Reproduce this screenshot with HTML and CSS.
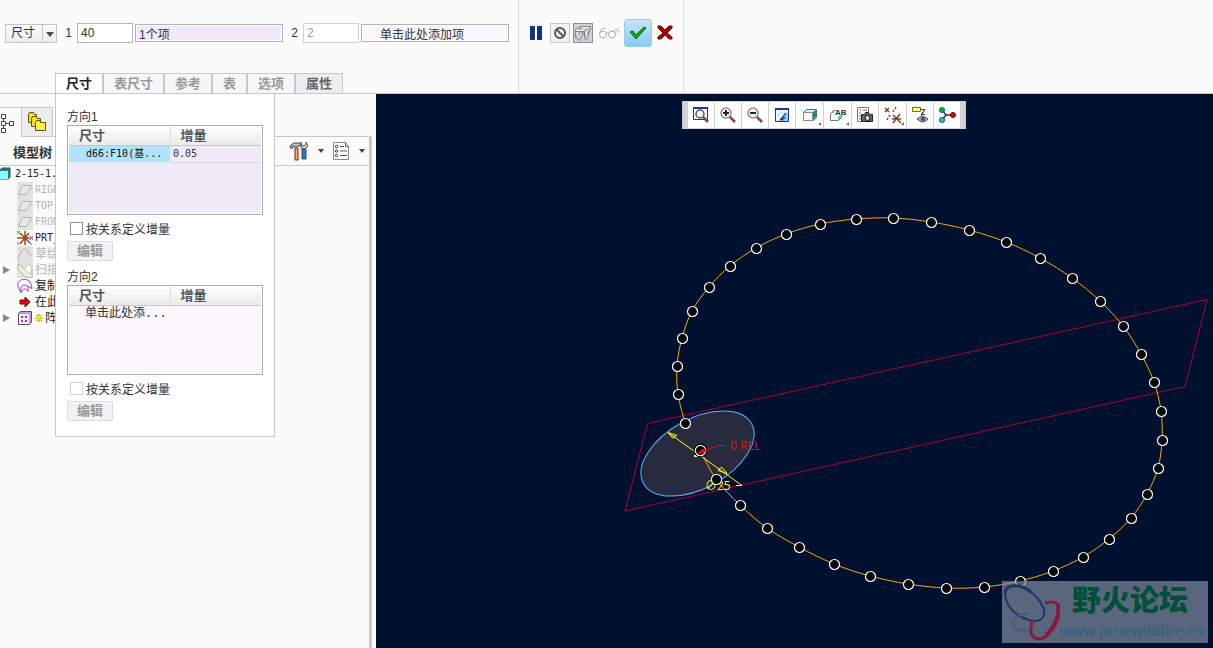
FILE: index.html
```html
<!DOCTYPE html>
<html lang="zh-CN">
  <head>
    <meta charset="UTF-8" />
    <meta name="viewport" content="width=device-width, initial-scale=1.0" />
    <title>阵列</title>
    <link rel="stylesheet" href="styles.css">
  </head>
  <body>
    <header class="dashboard">
      <div class="dash-main">
        <div class="fields">
          <div class="select-wrap">
            <select class="type-select" aria-label="阵列类型">
              <option>尺寸</option>
            </select>
            <span class="select-arrow"></span>
          </div>
          <label class="field-label" for="count1">1</label>
          <input class="count" type="text" id="count1" value="40" />
          <input class="collector active" type="text" aria-label="方向1" value="1个项" readonly />
          <label class="field-label" for="count2">2</label>
          <input class="count" type="text" id="count2" value="2" disabled />
          <input class="collector empty" type="text" aria-label="方向2" value="单击此处添加项" readonly />
        </div>
        <nav class="tabs">
          <button class="tab selected">尺寸</button>
          <button class="tab" disabled>表尺寸</button>
          <button class="tab" disabled>参考</button>
          <button class="tab" disabled>表</button>
          <button class="tab" disabled>选项</button>
          <button class="tab props">属性</button>
        </nav>
      </div>
      <div class="dash-side">
        <div class="dash-actions">
          <button class="action pause" aria-label="暂停">
            <svg width="14" height="16" viewBox="0 0 14 16"><path d="M1 1h4v13H1zM8 1h4v13H8z" fill="#0a3296" /><path d="M5.500 1v13.500H1M12.500 1v13.500H8" fill="none" stroke="#333" /></svg>
          </button>
          <button class="action framed" aria-label="无预览">
            <svg width="18" height="18" viewBox="0 0 18 18"><circle cx="9" cy="9" r="5" fill="none" stroke="#555" stroke-width="2" /><path d="M5.500 5.500l7 7" stroke="#555" stroke-width="2" /></svg>
          </button>
          <button class="action pressed" aria-label="分离预览">
            <svg width="18" height="18" viewBox="0 0 18 18" fill="none"><path d="M1.500 5.500l5-3h10v3l-6 8M1.500 5.500v8l4 3M5.500 16.500l5-9h-9M10.500 7.500l6-5M10.500 7.500v7l2 2 4-12M6.500 2.500v5l-5 6M6.500 7.500l5 3" stroke="#858585" /><path d="M2.500 6.500h7M7.500 3.500h8M12.500 7v6M3.500 8v5" stroke="#f2f2f2" /></svg>
          </button>
          <button class="action glasses" aria-label="校验">
            <svg width="22" height="14" viewBox="0 0 22 14" fill="none" stroke="#a8a8a8"><circle cx="5" cy="8.500" r="3.500" /><circle cx="14" cy="8.500" r="3.500" /><path d="M8 7.500q1.500-1.500 3 0M2 6.500c0-3 3-5 5-4l1 1M16 6c0-2 3-4 4-2v3" /></svg>
          </button>
          <button class="action ok" aria-label="确定">
            <svg width="20" height="16" viewBox="0 0 20 16"><path d="M2 7l3-1 3 4 8-8 2 1-10 11z" fill="#16a616" stroke="#087208" /></svg>
          </button>
          <button class="action" aria-label="取消">
            <svg width="18" height="16" viewBox="0 0 18 16"><path d="M2 1h3l4 4 4-4h3v2l-5 5 5 4v2h-3l-4-4-4 4H2v-2l5-4-5-5z" fill="#b00000" stroke="#7c0505" /></svg>
          </button>
        </div>
      </div>
    </header>

    <div class="workspace">
      <aside class="sidebar">
        <div class="nav-tabs">
          <button class="nav-tab current" aria-label="模型树">
            <svg width="15" height="20" viewBox="0 0 15 20" fill="#fff" stroke="#444"><path d="M3.500 5v11M3.500 10.500h7" fill="none" /><path d="M1.500 1.500h4v4h-4zM1.500 8.500h4v4h-4zM1.500 15.500h4v4h-4zM9.500 8.500h4v4h-4z" /></svg>
          </button>
          <button class="nav-tab" aria-label="文件夹浏览器">
            <svg width="20" height="20" viewBox="0 0 20 20" stroke="#5a5010"><path d="M1.500 2.500l1-2h4l1 2h2v8h-8z" fill="#f3df28" /><path d="M4.500 6.500l1-2h4l1 2h3v8h-9z" fill="#f3df28" /><path d="M8.500 10.500l1-2h3l1 2h5v8h-10z" fill="#fff04a" /></svg>
          </button>
          <span class="nav-rest"></span>
        </div>
        <div class="tree-head">
          <h2>模型树</h2>
          <div class="tree-tools">
            <button class="tool-btn" aria-label="设置">
              <svg width="20" height="20" viewBox="0 0 20 20"><path d="M1 7l1-3 3-2h6l3 3H9l-2 1-3-1v2z" fill="#b4cccc" stroke="#444" /><path d="M6 7h3v12H6z" fill="#f0b060" stroke="#8c1c10" /><path d="M12 1v3l3 1 2-2V1l2 4-3 3h-3l-2-4z" fill="#ccc" stroke="#555" /><path d="M13 8h4v10h-4z" fill="#2c6fd4" stroke="#38506e" /></svg>
            </button>
            <span class="caret"></span>
            <button class="tool-btn list" aria-label="显示">
              <svg width="17" height="20" viewBox="0 0 17 20" fill="none"><path d="M.5 1.500h12l3 4v13H.5z" fill="#fff" stroke="#888" /><path d="M12.500 1.500v4h3" stroke="#666" /><path d="M7 5.500h4M7 10h7M7 14.500h7" stroke="#555" /><circle cx="3.500" cy="5.500" r="1.200" stroke="#333" /><circle cx="3.500" cy="10" r="1.200" stroke="#333" /><circle cx="3.500" cy="14.500" r="1.200" stroke="#333" /></svg>
            </button>
            <span class="caret"></span>
          </div>
        </div>
        <ul class="tree">
          <li class="root"><svg width="12" height="14" viewBox="0 0 12 14"><path d="M0 3l2-2h8v9l-2 2H0z" fill="#168a90" stroke="#444" /><path d="M0 4h8v8H0z" fill="#8ffcff" /></svg>2-15-1.</li>
          <li class="dim"><i></i><svg class="grey" width="16" height="16" viewBox="0 0 16 16"><path d="M5.500 3.500h9l-5 9h-8z" fill="#e8e8e4" stroke="#b8b6a2" /></svg>RIGH</li>
          <li class="dim"><i></i><svg class="grey" width="16" height="16" viewBox="0 0 16 16"><path d="M5.500 3.500h9l-5 9h-8z" fill="#e8e8e4" stroke="#b8b6a2" /></svg>TOP</li>
          <li class="dim"><i></i><svg class="grey" width="16" height="16" viewBox="0 0 16 16"><path d="M5.500 3.500h9l-5 9h-8z" fill="#e8e8e4" stroke="#b8b6a2" /></svg>FRON</li>
          <li><i></i><svg width="16" height="16" viewBox="0 0 16 16" fill="none"><path d="M0 8h13M8 1v14M3 3l10 10M12 3l-9 11" stroke="#9a4a1c" stroke-width="1.500" /><path d="M0 1l3 3M3 1L0 4M13 6l3 4M16 6l-3 4M1 12v3M12 12l3 3" stroke="#666" /></svg>PRT_</li>
          <li class="dim cjk"><i></i><svg class="grey" width="16" height="16" viewBox="0 0 16 16" fill="none"><path d="M1 13l3-7c2-4 5-4 7-1 1 3 2 4 4 5" stroke="#b8b6a2" /><path d="M1 2.500h14M3 13.500h12" stroke="#c6c4b4" stroke-dasharray="1 4" /></svg>草绘</li>
          <li class="dim cjk"><i><b></b></i><svg class="grey" width="16" height="16" viewBox="0 0 16 16"><path d="M1 2l4 2 2 3 5-5 3 5v9l-7-1-7-8z" fill="#eeeee6" stroke="#b4b29c" /><path d="M7 7l5-5 3 5-2 5z" fill="#fff" stroke="#c4c2b0" /></svg>扫描</li>
          <li class="cjk"><i></i><svg width="16" height="16" viewBox="0 0 16 16" fill="none" stroke="#9a3ae0"><path d="M1.500 10C-1 4 3 1 8 1.500c5 0 6 4 7 9l-4-2v5C9 10 6 10 4 14.500L1.500 10M4 14.500C3 8 6 5 11 8.500" /></svg>复制</li>
          <li class="cjk"><i></i><svg width="16" height="16" viewBox="0 0 16 16"><path d="M3 6h5V3l5 5-5 5v-3H3z" fill="#f00000" stroke="#8a0000" /></svg>在此</li>
          <li class="cjk"><i><b></b></i><svg width="16" height="16" viewBox="0 0 16 16"><path d="M1.500 3.500l2-2h11v11l-2 2h-11z" fill="#b9a2dc" stroke="#555" /><path d="M2 4h10v10H2z" fill="#f4ebff" /><path d="M4 6h2v2H4zM8 6h2v2H8zM4 10h2v2H4zM8 10h2v2H8z" fill="#9330dd" /></svg><svg width="8" height="16" viewBox="0 0 8 16"><path d="M1 5l6 6M7 5l-6 6M4 4v8M0 8h8" stroke="#777" /><path d="M2 5l4 6M6 5l-4 6M1 8h6" stroke="#f2ea00" stroke-width="1.500" /></svg>阵</li>
        </ul>

        <section class="dim-panel">
          <h3>方向1</h3>
          <div class="dim-box chosen">
            <table>
              <thead>
                <tr><th class="col-dim">尺寸</th><th>增量</th></tr>
              </thead>
              <tbody>
                <tr><td class="picked">d66:F10(基...</td><td class="value">0.05</td></tr>
              </tbody>
            </table>
          </div>
          <label class="check"><input type="checkbox" />按关系定义增量</label>
          <button class="edit" disabled>编辑</button>
          <h3>方向2</h3>
          <div class="dim-box">
            <table>
              <thead>
                <tr><th class="col-dim">尺寸</th><th>增量</th></tr>
              </thead>
              <tbody>
                <tr><td class="hint">单击此处添...</td><td></td></tr>
              </tbody>
            </table>
          </div>
          <label class="check"><input type="checkbox" disabled />按关系定义增量</label>
          <button class="edit" disabled>编辑</button>
        </section>
      </aside>

      <main class="viewport">
        <svg class="model" viewBox="376 94 837 554" preserveAspectRatio="xMinYMin meet">
          <ellipse cx="697.500" cy="453.500" rx="61.700" ry="34.600" transform="rotate(-29 697.500 453.500)" fill="#282a3e" stroke="#58b0ff" />
          <path d="M647.500 423.500L1207 299.500 1185 386.500 625 511z" fill="none" stroke="#a8003c" />
          <path id="curve" fill="none" stroke="#ffa500" />
          <g id="marks" fill="#000" stroke="#fff" stroke-width="1.200"></g>
          <g fill="none" stroke="#ff0">
            <path d="M668 432.500L742 485.500H736M668 432.500l5 6M668 432.500l9 3M673 438l4-3M727 473.500l-5-6M727 473.500l-9-3M718 470l4-3" />
            <path d="M694 456h4" stroke-width="2" />
          </g>
          <circle cx="700.500" cy="450.500" r="6.500" fill="none" stroke="#000" />
          <circle cx="700.500" cy="450.500" r="5" fill="#000" stroke="#fff" />
          <path d="M698 453l20-7.500h7" fill="none" stroke="#f00" />
          <path d="M697 454l5-5 6 1-5 3z" fill="#f00" />
          <text class="note rel" x="730" y="450">0 REL</text>
          <text class="note dia" x="705" y="490">∅25</text>
          <circle cx="716.500" cy="479.500" r="5" fill="#000" stroke="#fff" />
        </svg>

        <div class="view-bar">
          <button aria-label="重新调整"><svg width="18" height="18" viewBox="0 0 18 18" fill="none"><path d="M1.500 1.500h14v12h-14z" stroke="#0a3f9c" /><path d="M1 2h15" stroke="#0a3f9c" stroke-width="2" /><circle cx="8" cy="8" r="4" fill="#e2f6ff" stroke="#555" stroke-width="1.500" /><path d="M11 11l5 5" stroke="#8c4a28" stroke-width="2.500" /></svg></button>
          <button aria-label="放大"><svg width="18" height="18" viewBox="0 0 18 18" fill="none"><circle cx="7" cy="7" r="5" fill="#fff" stroke="#888" stroke-width="1.500" /><path d="M4 7h6M7 4v6" stroke="#222" stroke-width="2" /><path d="M11 11l5 5" stroke="#8c4a28" stroke-width="2.500" /></svg></button>
          <button aria-label="缩小"><svg width="18" height="18" viewBox="0 0 18 18" fill="none"><circle cx="7" cy="7" r="5" fill="#fff" stroke="#888" stroke-width="1.500" /><path d="M4 7h6" stroke="#222" stroke-width="2" /><path d="M11 11l5 5" stroke="#8c4a28" stroke-width="2.500" /></svg></button>
          <button aria-label="重画"><svg width="18" height="18" viewBox="0 0 18 18" fill="none"><path d="M2.500 2.500h13v13h-13z" fill="#edf6ff" stroke="#0a3f9c" /><path d="M2 3h14" stroke="#0a3f9c" stroke-width="2" /><path d="M3 15c5 0 8-4 12-9v9z" fill="#9cc4ee" /><path d="M13 7l-5 6M7 13l2 1 3-3" stroke="#0a3a90" stroke-width="1.200" /><path d="M6 6h1M5 9h1M9 7h1" stroke="#7a9ad0" /></svg></button>
          <button class="more" aria-label="显示样式"><svg width="18" height="18" viewBox="0 0 18 18"><path d="M2.500 6.500l3-3h10v8l-3 3h-10z" fill="#aff" stroke="#666" /><path d="M12 6l3-2v7l-3 3z" fill="#148c92" /><path d="M2.500 6.500h9v8h-9z" fill="#f6f6f6" stroke="#888" /></svg></button>
          <button class="more" aria-label="已命名视图"><svg width="18" height="18" viewBox="0 0 18 18"><path d="M1.500 14.500v-7l3-3h3M1.500 14.500h8l3-3v-2" fill="none" stroke="#777" /><path d="M2 7l3-3v3zM9 14v-3l3-2v3z" fill="#2fd0d8" /><text class="icon-text" x="6" y="9">AB</text></svg></button>
          <button aria-label="视图管理器"><svg width="18" height="18" viewBox="0 0 18 18"><path d="M1.500 1.500h11v14h-11z" fill="#fff" stroke="#777" /><path d="M3 4h2M3 7h2M3 10h2M3 13h2M7 4h4" stroke="#777" /><path d="M5.500 8.500h3l1-2h3l1 2h3v7h-11z" fill="#666" stroke="#222" /><circle cx="11.500" cy="12" r="2.500" fill="#ddd" stroke="#111" /></svg></button>
          <button class="more" aria-label="基准显示"><svg width="18" height="18" viewBox="0 0 18 18" fill="none" stroke="#87401c" stroke-width="1.500"><path d="M1 2l4 4M5 2L1 6M12 1l-1 2M10 4l-1 2M6 9l-1 2M4 12l-1 2M9 9l8 8M16 8l-7 9M8 13h9" /></svg></button>
          <button aria-label="注释显示"><svg width="18" height="18" viewBox="0 0 18 18"><path d="M1.500 1.500h8v4h-8z" fill="#ffff8a" stroke="#777010" /><path d="M9 3.500h5l-4 5h4M13.500 4l-3 6" fill="none" stroke="#444" /><path d="M6 13q5-5 11 0-5 6-11 0z" fill="#9ab" stroke="#555" /><circle cx="12" cy="13" r="2" fill="#357" /></svg></button>
          <button aria-label="旋转中心"><svg width="18" height="18" viewBox="0 0 18 18"><path d="M4 4l4 5-4 5M8 9h7" fill="none" stroke="#333" stroke-width="1.500" /><circle cx="4" cy="4" r="2.500" fill="#0b3" stroke="#064" /><circle cx="4" cy="14" r="2.500" fill="#2cd" stroke="#055" /><circle cx="15" cy="9" r="2.500" fill="#e00" stroke="#700" /></svg></button>
        </div>

        <div class="watermark">
          <svg width="58" height="62" viewBox="0 0 58 62" fill="none"><path d="M27 39C12 35 3 23 3 12 4 2 19 3 29 11c10 8 14 17 13 23-2 6-9 7-15 5z" stroke="#1b3763" stroke-width="2" /><path d="M3 12C4 2 19 3 29 11" stroke="#1b3763" stroke-width="3" /><path d="M43 22c10-3 16 0 14 11-3 13-12 25-20 25-9-1-10-9-6-19" stroke="#8c1738" stroke-width="3" /><path d="M56 25c2 10-4 22-12 29" stroke="#8c1738" stroke-width="4" /><path d="M27 33c-8-1-16 4-16 10 1 7 10 7 18 4" stroke="#47597c" stroke-width="2" /></svg>
          <div class="mark-text">
            <strong>野火论坛</strong>
            <span>www.proewildfire.cn</span>
          </div>
        </div>
      </main>
    </div>

    <script>
      // pattern member positions, in model window coordinates
      const points = [
        [685, 423], [678, 394], [677, 366], [682, 338], [692, 311],
        [709, 287], [730, 266], [756, 248], [786, 234], [820, 224],
        [856, 219], [893, 218], [931, 222], [969, 230], [1006, 242],
        [1040, 258], [1072, 278], [1100, 301], [1123, 326], [1141, 354],
        [1154, 382], [1161, 411], [1162, 440], [1158, 468], [1147, 494],
        [1131, 518], [1109, 539], [1083, 557], [1053, 571], [1020, 581],
        [984, 587], [946, 588], [908, 584], [870, 576], [834, 564],
        [799, 547], [767, 528], [740, 505], [716, 479], [700, 450],
      ];

      function drawCurve() {
        let d = `M${points[0]}`;
        for (let i = 0; i < points.length - 1; i++) {
          const p0 = points[i - 1] || points[i];
          const p1 = points[i];
          const p2 = points[i + 1];
          const p3 = points[i + 2] || p2;
          d += `C${p1[0] + (p2[0] - p0[0]) / 6} ${p1[1] + (p2[1] - p0[1]) / 6}`;
          d += ` ${p2[0] - (p3[0] - p1[0]) / 6} ${p2[1] - (p3[1] - p1[1]) / 6}`;
          d += ` ${p2[0]} ${p2[1]}`;
        }
        document.getElementById("curve").setAttribute("d", d);
      }

      function drawMarks() {
        document.getElementById("marks").innerHTML = points
          .map(([x, y]) => `<circle cx="${x + 0.5}" cy="${y + 0.5}" r="5" />`)
          .join("");
      }

      drawCurve();
      drawMarks();
    </script>
  </body>
</html>
```

FILE: styles.css
```css
* {
  box-sizing: border-box;
}

body {
  margin: 0;
  height: 100vh;
  display: flex;
  flex-direction: column;
  overflow: hidden;
  font-family: "Liberation Sans", "Noto Sans CJK SC", sans-serif;
  font-size: 12px;
  color: #333;
  background-color: #fbfbfb;
}

button,
input,
select {
  font: inherit;
  color: inherit;
  margin: 0;
  padding: 0;
}

svg {
  display: block;
  flex: none;
}

/* Dashboard */
.dashboard {
  display: flex;
  height: 94px;
  flex: none;
  border-bottom: 1px solid #c6c8ca;
}

.dash-main {
  display: flex;
  flex-direction: column;
  justify-content: space-between;
  padding: 23px 9px 0 5px;
  border-right: 1px solid #d4d6d8;
}

.fields {
  display: flex;
  align-items: center;
  gap: 2px;
}

.select-wrap {
  position: relative;
  width: 52px;
  height: 19px;
}

.type-select {
  appearance: none;
  width: 100%;
  height: 100%;
  padding-left: 5px;
  border: 1px solid #c2c4c6;
  border-radius: 0;
  background: linear-gradient(#fbfbfb, #ececee);
}

.select-arrow {
  position: absolute;
  right: 0;
  top: 0;
  width: 15px;
  height: 19px;
  border: 1px solid #c2c4c6;
  pointer-events: none;
}

.select-arrow::after {
  content: "";
  position: absolute;
  left: 3px;
  top: 7px;
  border: 4px solid transparent;
  border-top: 5px solid #4a4a58;
  border-bottom: 0;
}

.field-label {
  width: 16px;
  padding-left: 3px;
  text-align: center;
}

.type-select,
.count,
.collector {
  outline: none;
}

.count {
  width: 56px;
  height: 20px;
  padding: 0 3px;
  border: 1px solid #b4b6b8;
  background-color: #fff;
}

.count:disabled {
  color: #999;
  border-color: #d0d2d4;
}

.collector {
  width: 148px;
  height: 18px;
  padding: 0 3px;
  border: 1px solid #b0b2b4;
  box-shadow: inset 0 0 0 1px #fff;
  background-color: #f9f6fe;
}

.collector.active {
  background-color: #f0eaf8;
}

.collector.empty {
  padding-left: 18px;
}

.tabs {
  display: flex;
  margin-left: 50px;
}

.tab {
  height: 20px;
  padding: 0 10px;
  border: 1px solid #c6c8ca;
  border-bottom: 0;
  background-color: #f6f6f7;
  font-size: 13px;
  line-height: 19px;
  font-weight: bold;
  color: #999;
}

.tab.selected {
  background-color: #fff;
  color: #222;
}

.tab.props {
  background-color: #ecedf0;
  color: #666;
}

.dash-side {
  padding: 19px 8px 0 8px;
  border-right: 1px solid #d8dadc;
}

.dash-actions {
  display: flex;
  align-items: center;
  gap: 3px;
  height: 28px;
}

.action {
  display: flex;
  align-items: center;
  justify-content: center;
  width: 20px;
  height: 20px;
  border: 0;
  background: none;
}

.action.pause {
  justify-content: flex-start;
  padding-left: 2px;
}

.action.framed {
  border: 1px solid #c6c8ca;
  background-color: #f3f3f4;
}

.action.pressed {
  border: 1px solid #8c8e90;
  background-color: #d0d1d2;
}

.action.glasses {
  width: 25px;
}

.action.ok {
  width: 28px;
  height: 28px;
  border: 1px solid #92cdf2;
  border-radius: 3px;
  background: linear-gradient(#c4e6fb, #86ccf8);
}

/* Navigator */
.workspace {
  display: flex;
  flex: 1;
  min-height: 0;
}

.sidebar {
  position: relative;
  display: flex;
  flex-direction: column;
  width: 376px;
  flex: none;
  padding: 13px 4px 0 0;
}

.nav-tabs {
  display: flex;
  height: 30px;
}

.nav-tab {
  display: flex;
  align-items: center;
  justify-content: center;
  width: 31px;
  border: 1px solid #c6c8ca;
  border-left: 0;
  background-color: #ecedf0;
}

.nav-tab.current {
  width: 22px;
  justify-content: flex-start;
  border-bottom: 0;
  background-color: #fbfbfb;
}

.nav-rest {
  flex: 1;
  border-bottom: 1px solid #c6c8ca;
}

.tree-head {
  display: flex;
  align-items: center;
  justify-content: space-between;
  height: 29px;
  padding: 0 4px 0 13px;
  border-bottom: 1px solid #c6c8ca;
  border-right: 3px solid #c6cacd;
}

.tree-head h2 {
  margin: 0;
  font-size: 13px;
  font-weight: bold;
}

.tree-tools {
  display: flex;
  align-items: center;
  gap: 9px;
}

.tool-btn {
  border: 0;
  background: none;
}

.caret {
  border: 3px solid transparent;
  border-top: 4px solid #444;
  border-bottom: 0;
}

.tree {
  flex: 1;
  margin: 0;
  padding: 0;
  list-style: none;
  border-right: 3px solid #c6cacd;
  font-family: "DejaVu Sans Mono", "Noto Sans CJK SC", monospace;
}

.tree li {
  display: flex;
  align-items: center;
  gap: 2px;
  height: 16px;
  font-size: 10px;
  line-height: 16px;
  color: #222;
}

.tree li.root {
  gap: 3px;
}

.tree li.cjk {
  font-size: 12px;
}

.tree li.dim {
  color: #b4b4b4;
}

.tree i {
  width: 15px;
  padding-left: 3px;
}

.tree b {
  display: block;
  width: 7px;
  border: 4px solid transparent;
  border-left: 7px solid #888;
  border-right: 0;
}

.grey {
  background-color: #e2e2e2;
}

/* Dimension panel, slides down over the navigator */
.dim-panel {
  position: absolute;
  left: 55px;
  top: 0;
  width: 220px;
  padding: 15px 11px;
  border: 1px solid #c6c8ca;
  border-top: 0;
  background-color: #fff;
}

.dim-panel h3 {
  margin: 0;
  font-size: 12px;
  line-height: 16px;
  font-weight: normal;
}

.dim-box {
  height: 90px;
  padding: 1px;
  border: 1px solid #acaeb0;
  background-color: #f9f6fe;
  box-shadow: inset 0 0 0 1px #fff;
}

.dim-box.chosen {
  background-color: #f0eaf8;
}

.dim-box table {
  width: 100%;
  table-layout: fixed;
  border-collapse: collapse;
}

.dim-box th {
  height: 18px;
  padding: 0 10px;
  border-bottom: 1px solid #c6c8ca;
  background: linear-gradient(#fdfdfd, #e9eaec);
  font-size: 13px;
  line-height: 17px;
  text-align: left;
  color: #555;
}

.dim-box .col-dim {
  width: 101px;
  border-right: 1px solid #dcdee0;
}

.dim-box td {
  height: 17px;
  padding: 0;
  line-height: 16px;
  white-space: nowrap;
}

.dim-box .picked {
  padding-left: 17px;
  background-color: #b0e2ff;
  font-family: "DejaVu Sans Mono", "Noto Sans CJK SC", monospace;
  font-size: 10px;
  color: #111;
}

.dim-box .value {
  padding-left: 3px;
  border-bottom: 1px solid #dcd8e0;
  font-family: "DejaVu Sans Mono", monospace;
  font-size: 10px;
}

.dim-box .hint {
  padding-left: 16px;
  font-family: "Liberation Mono", "Noto Sans CJK SC", monospace;
}

.check {
  display: flex;
  align-items: center;
  gap: 3px;
  height: 26px;
  padding-left: 3px;
}

.check input {
  appearance: none;
  width: 13px;
  height: 13px;
  border: 1px solid #8e9092;
  background-color: #fff;
}

.check input:disabled {
  border-color: #d4d6d8;
}

.edit {
  display: block;
  width: 46px;
  height: 20px;
  margin-bottom: 8px;
  border: 1px solid #dcdee0;
  border-radius: 2px;
  background-color: #f1f2f3;
  font-size: 13px;
  line-height: 18px;
  font-weight: bold;
  color: #999;
}

.edit:last-child {
  margin-bottom: 0;
}

/* Graphics window */
.viewport {
  position: relative;
  flex: 1;
  background-color: #001130;
  overflow: hidden;
}

.model {
  width: 100%;
  height: 100%;
}

.note {
  font-family: "Open Sans", sans-serif;
  font-size: 12px;
}

.rel {
  fill: #f00;
}

.dia {
  fill: #ff0;
}

.view-bar {
  position: absolute;
  left: 306px;
  top: 7px;
  display: flex;
  gap: 1px;
  height: 28px;
  padding: 1px 5px;
  border: 1px solid #c6c8ca;
  border-width: 0 1px;
  background-color: #d0d2d4;
}

.view-bar button {
  position: relative;
  display: flex;
  align-items: center;
  justify-content: center;
  width: 26px;
  border: 0;
  background-color: #fff;
}

.view-bar button.more {
  width: 27px;
}

.view-bar .more::after {
  content: "";
  position: absolute;
  right: 2px;
  bottom: 3px;
  border-left: 3px solid transparent;
  border-bottom: 3px solid #666;
}

.icon-text {
  font-family: "Liberation Sans", sans-serif;
  font-size: 8px;
  font-weight: bold;
  fill: #333;
}

.watermark {
  position: absolute;
  right: 5px;
  bottom: 5px;
  display: flex;
  width: 206px;
  height: 62px;
  background-color: rgba(128, 138, 158, 0.7);
}

.mark-text {
  display: flex;
  flex-direction: column;
  flex: none;
}

.mark-text strong {
  padding-left: 12px;
  font-size: 29px;
  line-height: 40px;
  font-weight: 900;
  color: #004f38;
}

.mark-text span {
  font-family: "Noto Sans", sans-serif;
  font-size: 15px;
  line-height: 18px;
  color: #2c647a;
}
```
